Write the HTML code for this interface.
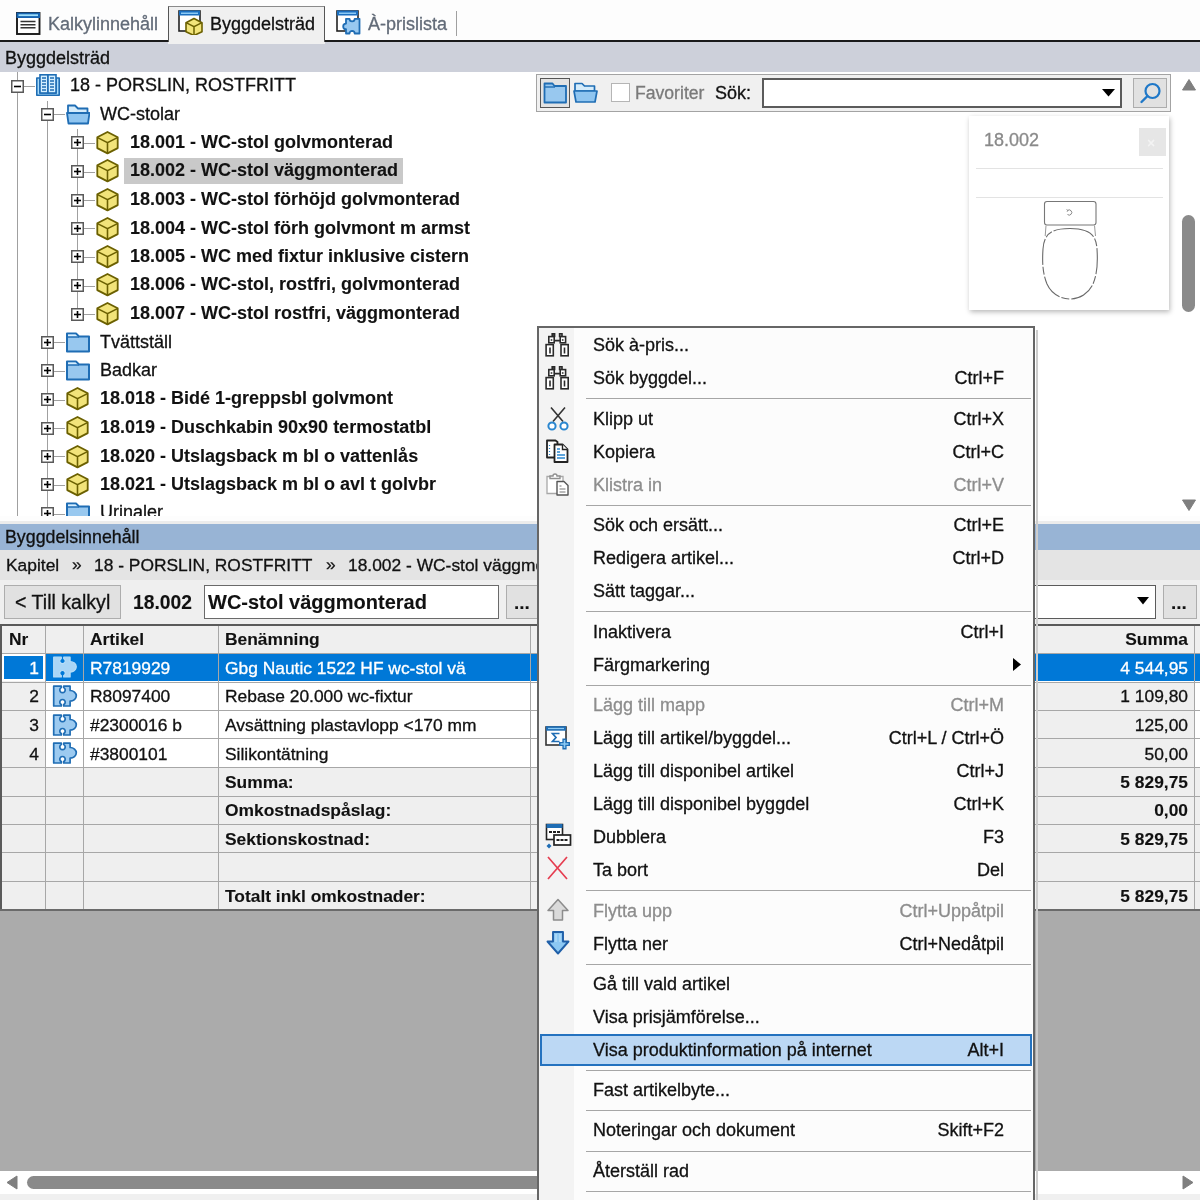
<!DOCTYPE html><html><head><meta charset="utf-8"><style>
html,body{margin:0;padding:0;width:1200px;height:1200px;overflow:hidden;background:#fff;font-family:"Liberation Sans", sans-serif;}
.t{position:absolute;white-space:pre;font-family:"Liberation Sans", sans-serif;}
.r{position:absolute;}
.wrap{position:absolute;left:0;top:0;width:1200px;height:1200px;overflow:hidden;will-change:transform;}
.t{-webkit-text-stroke:0.3px currentColor;}
.t.b{-webkit-text-stroke:0.1px currentColor;}
</style></head><body><div class="wrap">
<div class="r" style="left:0px;top:0px;width:1200px;height:40px;background:#fdfdfd"></div>
<div class="r" style="left:0px;top:40px;width:1200px;height:2px;background:#1a1a1a"></div>
<div class="r" style="left:168px;top:6px;width:157px;height:38px;background:#f0f0f0;border-left:1px solid #555;border-top:1px solid #8a8a8a;border-right:1px solid #555;box-sizing:border-box"></div>
<svg class="r" style="left:16px;top:12px" width="25" height="23" viewBox="0 0 25 23"><rect x="1" y="1" width="22.5" height="21" fill="#fff" stroke="#1a1a1a" stroke-width="1.9"/><rect x="0.5" y="0.5" width="23.5" height="5.5" fill="#1563b0"/><rect x="2.5" y="2.3" width="19.5" height="1.8" fill="#9fe0fb"/><path d="M4.5 9.5h15M4.5 12.8h15M4.5 15.8h15" stroke="#333" stroke-width="1.5"/></svg>
<div class="t" style="left:48px;top:14px;font-size:18px;line-height:20px;color:#626b78;">Kalkylinnehåll</div>
<svg class="r" style="left:178px;top:10px" width="26" height="25" viewBox="0 0 26 25"><rect x="1" y="1" width="21" height="20" fill="#fff" stroke="#222" stroke-width="1.6"/><rect x="1" y="0.5" width="21" height="5" fill="#1b6fc0"/><rect x="3" y="2.5" width="17" height="1.5" fill="#8ccaf5"/><path d="M16 8.5l8 4.2v9l-8 3.8l-8-3.8v-9z" fill="#f2e47a" stroke="#6b6000" stroke-width="1.6" stroke-linejoin="round"/><path d="M8 12.7l8 4l8-4M16 16.7v8.8" fill="none" stroke="#6b6000" stroke-width="1.5"/></svg>
<div class="t" style="left:210px;top:14px;font-size:18px;line-height:20px;color:#111;">Byggdelsträd</div>
<svg class="r" style="left:336px;top:10px" width="26" height="25" viewBox="0 0 26 25"><rect x="1" y="1" width="21" height="20" fill="#fff" stroke="#222" stroke-width="1.6"/><rect x="1" y="0.5" width="21" height="5" fill="#1b6fc0"/><rect x="3" y="2.5" width="17" height="1.5" fill="#8ccaf5"/><path d="M10 8.8h3.5a2.6 2.6 0 0 0 5.2 0h4.8v14.7h-4.8a2.6 2.6 0 0 0-5.2 0h-3.5v-4.3a2.8 2.8 0 0 1 0-5.6z" fill="#98c8f0" stroke="#1f6db4" stroke-width="1.8" stroke-linejoin="round"/></svg>
<div class="t" style="left:368px;top:14px;font-size:18px;line-height:20px;color:#626b78;">À-prislista</div>
<div class="r" style="left:456px;top:11px;width:1px;height:25px;background:#a0a0a0"></div>
<div class="r" style="left:0px;top:42px;width:1200px;height:30px;background:#cdd0da"></div>
<div class="r" style="left:168px;top:42px;width:157px;height:2px;background:#f0f0f0"></div>
<div class="t" style="left:5px;top:48px;font-size:18px;line-height:20px;color:#111;">Byggdelsträd</div>
<div class="r" style="left:0px;top:72px;width:1200px;height:444px;background:#fff"></div>
<div class="r" style="left:0;top:72px;width:1200px;height:444px;overflow:hidden">
<div class="r" style="left:0;top:-72px;width:1200px;height:1200px">
<div class="r" style="left:17px;top:72px;width:1px;height:444px;background:#a0a0a0"></div>
<div class="r" style="left:47px;top:101px;width:1px;height:444px;background:#a0a0a0"></div>
<div class="r" style="left:77px;top:129px;width:1px;height:185px;background:#a0a0a0"></div>
<div class="r" style="left:124px;top:158px;width:279px;height:26px;background:#c9c9c9"></div>
<div class="r" style="left:24px;top:86px;width:11px;height:1px;background:#a0a0a0"></div>
<svg class="r" style="left:11px;top:80px" width="13" height="13" viewBox="0 0 13 13"><rect x="0.75" y="0.75" width="11.5" height="11.5" fill="#fff" stroke="#5a5a5a" stroke-width="1.5"/><path d="M3 6.5h7" stroke="#000" stroke-width="1.6"/></svg>
<svg class="r" style="left:36px;top:74px" width="24" height="23" viewBox="0 0 24 23"><path d="M0.8 4h3.2v15h16v-15h3.2v17.2H0.8z" fill="#a9dcfb" stroke="#1f6db4" stroke-width="1.6" stroke-linejoin="round"/><rect x="4" y="0.8" width="8" height="18.2" fill="#d4efff" stroke="#1f6db4" stroke-width="1.6"/><rect x="12" y="0.8" width="8" height="18.2" fill="#d4efff" stroke="#1f6db4" stroke-width="1.6"/><path d="M6 4h4M6 7h4M6 10h4M6 13h4M6 16h4M14 4h4M14 7h4M14 10h4M14 13h4M14 16h4" stroke="#1f6db4" stroke-width="1.7"/></svg>
<div class="t" style="left:70px;top:75px;font-size:18px;line-height:20px;color:#111;">18 - PORSLIN, ROSTFRITT</div>
<div class="r" style="left:54px;top:114px;width:11px;height:1px;background:#a0a0a0"></div>
<svg class="r" style="left:41px;top:108px" width="13" height="13" viewBox="0 0 13 13"><rect x="0.75" y="0.75" width="11.5" height="11.5" fill="#fff" stroke="#5a5a5a" stroke-width="1.5"/><path d="M3 6.5h7" stroke="#000" stroke-width="1.6"/></svg>
<svg class="r" style="left:66px;top:104px" width="24" height="21" viewBox="0 0 24 21"><path d="M2 1.5h7l3 3h9.5v5H2z" fill="#d5ecfb" stroke="#1f6db4" stroke-width="1.8" stroke-linejoin="round"/><path d="M1 9h22.5l-1.5 10.5H2.5z" fill="#8fc5f0" stroke="#1f6db4" stroke-width="1.8" stroke-linejoin="round"/></svg>
<div class="t" style="left:100px;top:104px;font-size:18px;line-height:20px;color:#111;">WC-stolar</div>
<div class="r" style="left:84px;top:143px;width:11px;height:1px;background:#a0a0a0"></div>
<svg class="r" style="left:71px;top:136px" width="13" height="13" viewBox="0 0 13 13"><rect x="0.75" y="0.75" width="11.5" height="11.5" fill="#fff" stroke="#5a5a5a" stroke-width="1.5"/><path d="M3 6.5h7" stroke="#000" stroke-width="1.6"/><path d="M6.5 3v7" stroke="#000" stroke-width="1.6"/></svg>
<svg class="r" style="left:96px;top:131px" width="23" height="24" viewBox="0 0 23 24"><path d="M11.5 1l10.2 5.3v10.8l-10.2 5.3l-10.2-5.3v-10.8z" fill="#f2e47a" stroke="#6b6000" stroke-width="1.8" stroke-linejoin="round"/><path d="M1.6 6.6l9.9 5l9.9-5M11.5 11.6v10.6" fill="none" stroke="#6b6000" stroke-width="1.6"/></svg>
<div class="t b" style="left:130px;top:132px;font-size:18px;line-height:20px;font-weight:bold;color:#111;">18.001 - WC-stol golvmonterad</div>
<div class="r" style="left:84px;top:172px;width:11px;height:1px;background:#a0a0a0"></div>
<svg class="r" style="left:71px;top:165px" width="13" height="13" viewBox="0 0 13 13"><rect x="0.75" y="0.75" width="11.5" height="11.5" fill="#fff" stroke="#5a5a5a" stroke-width="1.5"/><path d="M3 6.5h7" stroke="#000" stroke-width="1.6"/><path d="M6.5 3v7" stroke="#000" stroke-width="1.6"/></svg>
<svg class="r" style="left:96px;top:159px" width="23" height="24" viewBox="0 0 23 24"><path d="M11.5 1l10.2 5.3v10.8l-10.2 5.3l-10.2-5.3v-10.8z" fill="#f2e47a" stroke="#6b6000" stroke-width="1.8" stroke-linejoin="round"/><path d="M1.6 6.6l9.9 5l9.9-5M11.5 11.6v10.6" fill="none" stroke="#6b6000" stroke-width="1.6"/></svg>
<div class="t b" style="left:130px;top:160px;font-size:18px;line-height:20px;font-weight:bold;color:#111;">18.002 - WC-stol väggmonterad</div>
<div class="r" style="left:84px;top:200px;width:11px;height:1px;background:#a0a0a0"></div>
<svg class="r" style="left:71px;top:194px" width="13" height="13" viewBox="0 0 13 13"><rect x="0.75" y="0.75" width="11.5" height="11.5" fill="#fff" stroke="#5a5a5a" stroke-width="1.5"/><path d="M3 6.5h7" stroke="#000" stroke-width="1.6"/><path d="M6.5 3v7" stroke="#000" stroke-width="1.6"/></svg>
<svg class="r" style="left:96px;top:188px" width="23" height="24" viewBox="0 0 23 24"><path d="M11.5 1l10.2 5.3v10.8l-10.2 5.3l-10.2-5.3v-10.8z" fill="#f2e47a" stroke="#6b6000" stroke-width="1.8" stroke-linejoin="round"/><path d="M1.6 6.6l9.9 5l9.9-5M11.5 11.6v10.6" fill="none" stroke="#6b6000" stroke-width="1.6"/></svg>
<div class="t b" style="left:130px;top:189px;font-size:18px;line-height:20px;font-weight:bold;color:#111;">18.003 - WC-stol förhöjd golvmonterad</div>
<div class="r" style="left:84px;top:228px;width:11px;height:1px;background:#a0a0a0"></div>
<svg class="r" style="left:71px;top:222px" width="13" height="13" viewBox="0 0 13 13"><rect x="0.75" y="0.75" width="11.5" height="11.5" fill="#fff" stroke="#5a5a5a" stroke-width="1.5"/><path d="M3 6.5h7" stroke="#000" stroke-width="1.6"/><path d="M6.5 3v7" stroke="#000" stroke-width="1.6"/></svg>
<svg class="r" style="left:96px;top:217px" width="23" height="24" viewBox="0 0 23 24"><path d="M11.5 1l10.2 5.3v10.8l-10.2 5.3l-10.2-5.3v-10.8z" fill="#f2e47a" stroke="#6b6000" stroke-width="1.8" stroke-linejoin="round"/><path d="M1.6 6.6l9.9 5l9.9-5M11.5 11.6v10.6" fill="none" stroke="#6b6000" stroke-width="1.6"/></svg>
<div class="t b" style="left:130px;top:218px;font-size:18px;line-height:20px;font-weight:bold;color:#111;">18.004 - WC-stol förh golvmont m armst</div>
<div class="r" style="left:84px;top:257px;width:11px;height:1px;background:#a0a0a0"></div>
<svg class="r" style="left:71px;top:250px" width="13" height="13" viewBox="0 0 13 13"><rect x="0.75" y="0.75" width="11.5" height="11.5" fill="#fff" stroke="#5a5a5a" stroke-width="1.5"/><path d="M3 6.5h7" stroke="#000" stroke-width="1.6"/><path d="M6.5 3v7" stroke="#000" stroke-width="1.6"/></svg>
<svg class="r" style="left:96px;top:245px" width="23" height="24" viewBox="0 0 23 24"><path d="M11.5 1l10.2 5.3v10.8l-10.2 5.3l-10.2-5.3v-10.8z" fill="#f2e47a" stroke="#6b6000" stroke-width="1.8" stroke-linejoin="round"/><path d="M1.6 6.6l9.9 5l9.9-5M11.5 11.6v10.6" fill="none" stroke="#6b6000" stroke-width="1.6"/></svg>
<div class="t b" style="left:130px;top:246px;font-size:18px;line-height:20px;font-weight:bold;color:#111;">18.005 - WC med fixtur inklusive cistern</div>
<div class="r" style="left:84px;top:286px;width:11px;height:1px;background:#a0a0a0"></div>
<svg class="r" style="left:71px;top:279px" width="13" height="13" viewBox="0 0 13 13"><rect x="0.75" y="0.75" width="11.5" height="11.5" fill="#fff" stroke="#5a5a5a" stroke-width="1.5"/><path d="M3 6.5h7" stroke="#000" stroke-width="1.6"/><path d="M6.5 3v7" stroke="#000" stroke-width="1.6"/></svg>
<svg class="r" style="left:96px;top:273px" width="23" height="24" viewBox="0 0 23 24"><path d="M11.5 1l10.2 5.3v10.8l-10.2 5.3l-10.2-5.3v-10.8z" fill="#f2e47a" stroke="#6b6000" stroke-width="1.8" stroke-linejoin="round"/><path d="M1.6 6.6l9.9 5l9.9-5M11.5 11.6v10.6" fill="none" stroke="#6b6000" stroke-width="1.6"/></svg>
<div class="t b" style="left:130px;top:274px;font-size:18px;line-height:20px;font-weight:bold;color:#111;">18.006 - WC-stol, rostfri, golvmonterad</div>
<div class="r" style="left:84px;top:314px;width:11px;height:1px;background:#a0a0a0"></div>
<svg class="r" style="left:71px;top:308px" width="13" height="13" viewBox="0 0 13 13"><rect x="0.75" y="0.75" width="11.5" height="11.5" fill="#fff" stroke="#5a5a5a" stroke-width="1.5"/><path d="M3 6.5h7" stroke="#000" stroke-width="1.6"/><path d="M6.5 3v7" stroke="#000" stroke-width="1.6"/></svg>
<svg class="r" style="left:96px;top:302px" width="23" height="24" viewBox="0 0 23 24"><path d="M11.5 1l10.2 5.3v10.8l-10.2 5.3l-10.2-5.3v-10.8z" fill="#f2e47a" stroke="#6b6000" stroke-width="1.8" stroke-linejoin="round"/><path d="M1.6 6.6l9.9 5l9.9-5M11.5 11.6v10.6" fill="none" stroke="#6b6000" stroke-width="1.6"/></svg>
<div class="t b" style="left:130px;top:303px;font-size:18px;line-height:20px;font-weight:bold;color:#111;">18.007 - WC-stol rostfri, väggmonterad</div>
<div class="r" style="left:54px;top:342px;width:11px;height:1px;background:#a0a0a0"></div>
<svg class="r" style="left:41px;top:336px" width="13" height="13" viewBox="0 0 13 13"><rect x="0.75" y="0.75" width="11.5" height="11.5" fill="#fff" stroke="#5a5a5a" stroke-width="1.5"/><path d="M3 6.5h7" stroke="#000" stroke-width="1.6"/><path d="M6.5 3v7" stroke="#000" stroke-width="1.6"/></svg>
<svg class="r" style="left:66px;top:332px" width="24" height="21" viewBox="0 0 24 21"><path d="M1 1.5h9l3 3h10v15H1z" fill="#98c8ef" stroke="#1f6db4" stroke-width="2" stroke-linejoin="round"/><path d="M2 2.5h7.5l2.5 2.5H2z" fill="#d8efff"/><path d="M1 5h12" stroke="#1f6db4" stroke-width="1.5"/></svg>
<div class="t" style="left:100px;top:332px;font-size:18px;line-height:20px;color:#111;">Tvättställ</div>
<div class="r" style="left:54px;top:371px;width:11px;height:1px;background:#a0a0a0"></div>
<svg class="r" style="left:41px;top:364px" width="13" height="13" viewBox="0 0 13 13"><rect x="0.75" y="0.75" width="11.5" height="11.5" fill="#fff" stroke="#5a5a5a" stroke-width="1.5"/><path d="M3 6.5h7" stroke="#000" stroke-width="1.6"/><path d="M6.5 3v7" stroke="#000" stroke-width="1.6"/></svg>
<svg class="r" style="left:66px;top:360px" width="24" height="21" viewBox="0 0 24 21"><path d="M1 1.5h9l3 3h10v15H1z" fill="#98c8ef" stroke="#1f6db4" stroke-width="2" stroke-linejoin="round"/><path d="M2 2.5h7.5l2.5 2.5H2z" fill="#d8efff"/><path d="M1 5h12" stroke="#1f6db4" stroke-width="1.5"/></svg>
<div class="t" style="left:100px;top:360px;font-size:18px;line-height:20px;color:#111;">Badkar</div>
<div class="r" style="left:54px;top:400px;width:11px;height:1px;background:#a0a0a0"></div>
<svg class="r" style="left:41px;top:393px" width="13" height="13" viewBox="0 0 13 13"><rect x="0.75" y="0.75" width="11.5" height="11.5" fill="#fff" stroke="#5a5a5a" stroke-width="1.5"/><path d="M3 6.5h7" stroke="#000" stroke-width="1.6"/><path d="M6.5 3v7" stroke="#000" stroke-width="1.6"/></svg>
<svg class="r" style="left:66px;top:387px" width="23" height="24" viewBox="0 0 23 24"><path d="M11.5 1l10.2 5.3v10.8l-10.2 5.3l-10.2-5.3v-10.8z" fill="#f2e47a" stroke="#6b6000" stroke-width="1.8" stroke-linejoin="round"/><path d="M1.6 6.6l9.9 5l9.9-5M11.5 11.6v10.6" fill="none" stroke="#6b6000" stroke-width="1.6"/></svg>
<div class="t b" style="left:100px;top:388px;font-size:18px;line-height:20px;font-weight:bold;color:#111;">18.018 - Bidé 1-greppsbl golvmont</div>
<div class="r" style="left:54px;top:428px;width:11px;height:1px;background:#a0a0a0"></div>
<svg class="r" style="left:41px;top:422px" width="13" height="13" viewBox="0 0 13 13"><rect x="0.75" y="0.75" width="11.5" height="11.5" fill="#fff" stroke="#5a5a5a" stroke-width="1.5"/><path d="M3 6.5h7" stroke="#000" stroke-width="1.6"/><path d="M6.5 3v7" stroke="#000" stroke-width="1.6"/></svg>
<svg class="r" style="left:66px;top:416px" width="23" height="24" viewBox="0 0 23 24"><path d="M11.5 1l10.2 5.3v10.8l-10.2 5.3l-10.2-5.3v-10.8z" fill="#f2e47a" stroke="#6b6000" stroke-width="1.8" stroke-linejoin="round"/><path d="M1.6 6.6l9.9 5l9.9-5M11.5 11.6v10.6" fill="none" stroke="#6b6000" stroke-width="1.6"/></svg>
<div class="t b" style="left:100px;top:417px;font-size:18px;line-height:20px;font-weight:bold;color:#111;">18.019 - Duschkabin 90x90 termostatbl</div>
<div class="r" style="left:54px;top:456px;width:11px;height:1px;background:#a0a0a0"></div>
<svg class="r" style="left:41px;top:450px" width="13" height="13" viewBox="0 0 13 13"><rect x="0.75" y="0.75" width="11.5" height="11.5" fill="#fff" stroke="#5a5a5a" stroke-width="1.5"/><path d="M3 6.5h7" stroke="#000" stroke-width="1.6"/><path d="M6.5 3v7" stroke="#000" stroke-width="1.6"/></svg>
<svg class="r" style="left:66px;top:445px" width="23" height="24" viewBox="0 0 23 24"><path d="M11.5 1l10.2 5.3v10.8l-10.2 5.3l-10.2-5.3v-10.8z" fill="#f2e47a" stroke="#6b6000" stroke-width="1.8" stroke-linejoin="round"/><path d="M1.6 6.6l9.9 5l9.9-5M11.5 11.6v10.6" fill="none" stroke="#6b6000" stroke-width="1.6"/></svg>
<div class="t b" style="left:100px;top:446px;font-size:18px;line-height:20px;font-weight:bold;color:#111;">18.020 - Utslagsback m bl o vattenlås</div>
<div class="r" style="left:54px;top:485px;width:11px;height:1px;background:#a0a0a0"></div>
<svg class="r" style="left:41px;top:478px" width="13" height="13" viewBox="0 0 13 13"><rect x="0.75" y="0.75" width="11.5" height="11.5" fill="#fff" stroke="#5a5a5a" stroke-width="1.5"/><path d="M3 6.5h7" stroke="#000" stroke-width="1.6"/><path d="M6.5 3v7" stroke="#000" stroke-width="1.6"/></svg>
<svg class="r" style="left:66px;top:473px" width="23" height="24" viewBox="0 0 23 24"><path d="M11.5 1l10.2 5.3v10.8l-10.2 5.3l-10.2-5.3v-10.8z" fill="#f2e47a" stroke="#6b6000" stroke-width="1.8" stroke-linejoin="round"/><path d="M1.6 6.6l9.9 5l9.9-5M11.5 11.6v10.6" fill="none" stroke="#6b6000" stroke-width="1.6"/></svg>
<div class="t b" style="left:100px;top:474px;font-size:18px;line-height:20px;font-weight:bold;color:#111;">18.021 - Utslagsback m bl o avl t golvbr</div>
<div class="r" style="left:54px;top:514px;width:11px;height:1px;background:#a0a0a0"></div>
<svg class="r" style="left:41px;top:507px" width="13" height="13" viewBox="0 0 13 13"><rect x="0.75" y="0.75" width="11.5" height="11.5" fill="#fff" stroke="#5a5a5a" stroke-width="1.5"/><path d="M3 6.5h7" stroke="#000" stroke-width="1.6"/><path d="M6.5 3v7" stroke="#000" stroke-width="1.6"/></svg>
<svg class="r" style="left:66px;top:502px" width="24" height="21" viewBox="0 0 24 21"><path d="M1 1.5h9l3 3h10v15H1z" fill="#98c8ef" stroke="#1f6db4" stroke-width="2" stroke-linejoin="round"/><path d="M2 2.5h7.5l2.5 2.5H2z" fill="#d8efff"/><path d="M1 5h12" stroke="#1f6db4" stroke-width="1.5"/></svg>
<div class="t" style="left:100px;top:502px;font-size:18px;line-height:20px;color:#111;">Urinaler</div>
</div></div>
<div class="r" style="left:536px;top:74px;width:635px;height:38px;background:#f0f0f0;border:1px solid #a3a3a3;box-sizing:border-box"></div>
<div class="r" style="left:540px;top:78px;width:30px;height:30px;background:#e2e2e2;border:1.5px solid #555;box-sizing:border-box"></div>
<svg class="r" style="left:543px;top:82px" width="25" height="22" viewBox="0 0 25 22"><path d="M1.5 1.5h8l2 2.5h11.5v16.5h-21.5z" fill="#98c8ef" stroke="#1f6db4" stroke-width="1.8" stroke-linejoin="round"/><path d="M1.5 5h10.5" stroke="#1f6db4" stroke-width="1.4"/></svg>
<svg class="r" style="left:573px;top:82px" width="25" height="22" viewBox="0 0 25 22"><path d="M2 1.5h7l2.5 2.5h10v5H2z" fill="#d5ecfb" stroke="#1f6db4" stroke-width="1.7" stroke-linejoin="round"/><path d="M1 9h23l-2 11H3z" fill="#8fc5f0" stroke="#1f6db4" stroke-width="1.7" stroke-linejoin="round"/></svg>
<div class="r" style="left:611px;top:83px;width:19px;height:19px;background:#fff;border:1px solid #b5b5b5;box-sizing:border-box"></div>
<div class="t" style="left:635px;top:83px;font-size:17.6px;line-height:20px;color:#7a7a7a;">Favoriter</div>
<div class="t" style="left:715px;top:83px;font-size:18px;line-height:20px;color:#111;">Sök:</div>
<div class="r" style="left:762px;top:78px;width:360px;height:30px;background:#fff;border:2px solid #5b5b5b;box-sizing:border-box"></div>
<svg class="r" style="left:1102px;top:89px" width="13" height="8" viewBox="0 0 13 8"><path d="M0 0h13l-6.5 7.5z" fill="#000"/></svg>
<div class="r" style="left:1133px;top:78px;width:34px;height:30px;background:#e1e1e1;border:1px solid #adadad;box-sizing:border-box"></div>
<svg class="r" style="left:1138px;top:81px" width="25" height="25" viewBox="0 0 25 25"><circle cx="14.5" cy="10" r="7" fill="none" stroke="#1f78c8" stroke-width="2.2"/><path d="M9.5 15l-6 6" stroke="#1f78c8" stroke-width="2.4" stroke-linecap="round"/></svg>
<div class="r" style="left:969px;top:116px;width:200px;height:194px;background:#fff;box-shadow:1px 2px 5px rgba(0,0,0,0.28)"></div>
<div class="t" style="left:984px;top:130px;font-size:18px;line-height:20px;color:#8a8a8a;">18.002</div>
<div class="r" style="left:1139px;top:128px;width:27px;height:28px;background:#e6e6e6"></div>
<div class="t" style="left:1147px;top:135px;font-size:14px;line-height:16px;color:#f4f4f4;">×</div>
<div class="r" style="left:976px;top:168px;width:187px;height:1px;background:#e3e3e3"></div>
<div class="r" style="left:976px;top:197px;width:187px;height:1px;background:#e3e3e3"></div>
<svg class="r" style="left:1040px;top:199px" width="60" height="104" viewBox="0 0 60 104"><rect x="4.5" y="2.5" width="51.5" height="23.5" rx="2.5" fill="#fff" stroke="#777" stroke-width="1.1"/><path d="M27.5 11.5a2.6 2.6 0 1 1 0 4" fill="none" stroke="#888" stroke-width="1"/><path d="M26.5 10.5l1.5 1l-1 1.3" fill="none" stroke="#888" stroke-width="0.9"/><path d="M6 26.5L5.2 37M54.5 26.5L55.5 37" fill="none" stroke="#999" stroke-width="1"/><path d="M30 29.5C46 29.5 56 33 57 50C58 65 57 75 53 85C49 94 40 100 30 100C20 100 11 94 7 85C3 75 2 65 3 50C4 33 14 29.5 30 29.5Z" fill="#fff" stroke="#6a6a6a" stroke-width="1.1" stroke-dasharray="26 2 8 2"/></svg>
<svg class="r" style="left:1182px;top:79px" width="14" height="12" viewBox="0 0 14 12"><path d="M7 0.5l6.5 10.5h-13z" fill="#7f7f7f" stroke="#7f7f7f" stroke-linejoin="round"/></svg>
<div class="r" style="left:1182px;top:215px;width:13px;height:97px;background:#8a8a8a;border-radius:6.5px"></div>
<svg class="r" style="left:1182px;top:499px" width="14" height="12" viewBox="0 0 14 12"><path d="M7 11.5l6.5-10.5h-13z" fill="#7f7f7f" stroke="#7f7f7f" stroke-linejoin="round"/></svg>
<div class="r" style="left:0px;top:516px;width:1200px;height:5px;background:#fdfdfd"></div>
<div class="r" style="left:0px;top:521px;width:1200px;height:3px;background:#ececec"></div>
<div class="r" style="left:0px;top:524px;width:1200px;height:26px;background:#98b4d5"></div>
<div class="t" style="left:5px;top:527px;font-size:17.8px;line-height:20px;color:#111;">Byggdelsinnehåll</div>
<div class="r" style="left:0px;top:550px;width:1200px;height:30px;background:#e4e4e4"></div>
<div class="t" style="left:6px;top:555px;font-size:17.4px;line-height:20px;color:#111;">Kapitel</div>
<div class="t" style="left:72px;top:554px;font-size:17.4px;line-height:20px;color:#111;">»</div>
<div class="t" style="left:94px;top:555px;font-size:17.4px;line-height:20px;color:#111;">18 - PORSLIN, ROSTFRITT</div>
<div class="t" style="left:326px;top:554px;font-size:17.4px;line-height:20px;color:#111;">»</div>
<div class="t" style="left:348px;top:555px;font-size:17.4px;line-height:20px;color:#111;">18.002 - WC-stol väggmonterad</div>
<div class="r" style="left:0px;top:580px;width:1200px;height:44px;background:#efefef"></div>
<div class="r" style="left:4px;top:585px;width:117px;height:34px;background:#e1e1e1;border:1px solid #adadad;box-sizing:border-box"></div>
<div class="t" style="left:15px;top:591px;font-size:19.6px;line-height:22px;color:#111;">&lt; Till kalkyl</div>
<div class="t b" style="left:133px;top:592px;font-size:19.3px;line-height:21px;font-weight:bold;color:#111;">18.002</div>
<div class="r" style="left:204px;top:585px;width:295px;height:34px;background:#fff;border:1px solid #6a6a6a;box-sizing:border-box"></div>
<div class="t b" style="left:208px;top:591px;font-size:20px;line-height:22px;font-weight:bold;color:#111;">WC-stol väggmonterad</div>
<div class="r" style="left:506px;top:585px;width:34px;height:34px;background:#e1e1e1;border:1px solid #adadad;box-sizing:border-box"></div>
<div class="t b" style="left:514px;top:592px;font-size:19px;line-height:21px;font-weight:bold;color:#111;">...</div>
<div class="r" style="left:1000px;top:585px;width:156px;height:34px;background:#fff;border:1px solid #5b5b5b;box-sizing:border-box"></div>
<svg class="r" style="left:1137px;top:597px" width="12" height="8" viewBox="0 0 12 8"><path d="M0 0h12l-6 7.5z" fill="#000"/></svg>
<div class="r" style="left:1163px;top:585px;width:34px;height:34px;background:#e1e1e1;border:1px solid #adadad;box-sizing:border-box"></div>
<div class="t b" style="left:1171px;top:592px;font-size:19px;line-height:21px;font-weight:bold;color:#111;">...</div>
<div class="r" style="left:0px;top:624px;width:1200px;height:286px;background:#fff"></div>
<div class="r" style="left:0px;top:624px;width:1200px;height:2px;background:#5a5a5a"></div>
<div class="r" style="left:0px;top:624px;width:2px;height:286px;background:#5a5a5a"></div>
<div class="r" style="left:2px;top:626px;width:1198px;height:27px;background:#efefef"></div>
<div class="r" style="left:2px;top:654px;width:44px;height:28px;background:#efefef"></div>
<div class="r" style="left:2px;top:683px;width:44px;height:28px;background:#efefef"></div>
<div class="r" style="left:2px;top:711px;width:44px;height:28px;background:#efefef"></div>
<div class="r" style="left:2px;top:739px;width:44px;height:28px;background:#efefef"></div>
<div class="r" style="left:2px;top:768px;width:44px;height:28px;background:#efefef"></div>
<div class="r" style="left:2px;top:797px;width:44px;height:28px;background:#efefef"></div>
<div class="r" style="left:2px;top:825px;width:44px;height:28px;background:#efefef"></div>
<div class="r" style="left:2px;top:853px;width:44px;height:28px;background:#efefef"></div>
<div class="r" style="left:2px;top:882px;width:44px;height:28px;background:#efefef"></div>
<div class="r" style="left:1036px;top:683px;width:158px;height:28px;background:#efefef"></div>
<div class="r" style="left:1036px;top:711px;width:158px;height:28px;background:#efefef"></div>
<div class="r" style="left:1036px;top:739px;width:158px;height:28px;background:#efefef"></div>
<div class="r" style="left:2px;top:768px;width:1198px;height:28px;background:#efefef"></div>
<div class="r" style="left:2px;top:797px;width:1198px;height:28px;background:#efefef"></div>
<div class="r" style="left:2px;top:825px;width:1198px;height:28px;background:#efefef"></div>
<div class="r" style="left:2px;top:853px;width:1198px;height:28px;background:#efefef"></div>
<div class="r" style="left:2px;top:882px;width:1198px;height:28px;background:#efefef"></div>
<div class="r" style="left:46px;top:654px;width:1154px;height:27px;background:#0078d7"></div>
<div class="r" style="left:2px;top:654px;width:44px;height:27px;background:#fff"></div>
<div class="r" style="left:4px;top:656px;width:39px;height:23px;background:#0078d7"></div>
<div class="r" style="left:2px;top:653px;width:1198px;height:1px;background:#a7a7a7"></div>
<div class="r" style="left:2px;top:682px;width:1198px;height:1px;background:#a7a7a7"></div>
<div class="r" style="left:2px;top:710px;width:1198px;height:1px;background:#a7a7a7"></div>
<div class="r" style="left:2px;top:738px;width:1198px;height:1px;background:#a7a7a7"></div>
<div class="r" style="left:2px;top:767px;width:1198px;height:1px;background:#a7a7a7"></div>
<div class="r" style="left:2px;top:796px;width:1198px;height:1px;background:#a7a7a7"></div>
<div class="r" style="left:2px;top:824px;width:1198px;height:1px;background:#a7a7a7"></div>
<div class="r" style="left:2px;top:852px;width:1198px;height:1px;background:#a7a7a7"></div>
<div class="r" style="left:2px;top:881px;width:1198px;height:1px;background:#a7a7a7"></div>
<div class="r" style="left:0px;top:909px;width:1200px;height:2px;background:#6a6a6a"></div>
<div class="r" style="left:45px;top:626px;width:1px;height:283px;background:#a7a7a7"></div>
<div class="r" style="left:83px;top:626px;width:1px;height:283px;background:#a7a7a7"></div>
<div class="r" style="left:218px;top:626px;width:1px;height:283px;background:#a7a7a7"></div>
<div class="r" style="left:530px;top:626px;width:1px;height:283px;background:#a7a7a7"></div>
<div class="r" style="left:1194px;top:626px;width:1px;height:283px;background:#a7a7a7"></div>
<div class="t b" style="left:9px;top:629px;font-size:17.4px;line-height:20px;font-weight:bold;color:#111;">Nr</div>
<div class="t b" style="left:90px;top:629px;font-size:17.4px;line-height:20px;font-weight:bold;color:#111;">Artikel</div>
<div class="t b" style="left:225px;top:629px;font-size:17.4px;line-height:20px;font-weight:bold;color:#111;">Benämning</div>
<div class="t b" style="right:12px;top:629px;font-size:17.4px;line-height:20px;font-weight:bold;color:#111;">Summa</div>
<div class="t" style="right:1161px;top:658px;font-size:17.4px;line-height:20px;color:#fff;">1</div>
<svg class="r" style="left:52px;top:656px" width="26" height="23" viewBox="0 0 26 23"><path d="M1.2 1.2H8.8V2.6A2.7 2.7 0 1 0 11.2 2.6V1.2H17.6V5.5A6.2 5.35 0 0 1 17.6 16.2V21H11.2V19.6A2.7 2.7 0 1 0 8.8 19.6V21H1.2Z" fill="#a9d5f6" stroke="#b8def8" stroke-width="1.2" stroke-linejoin="round" transform="translate(0.5,0)"/></svg>
<div class="t" style="left:90px;top:658px;font-size:17.4px;line-height:20px;color:#fff;">R7819929</div>
<div class="t" style="left:225px;top:658px;font-size:17.4px;line-height:20px;color:#fff;">Gbg Nautic 1522 HF wc-stol vä</div>
<div class="t" style="right:12px;top:658px;font-size:17.4px;line-height:20px;color:#fff;">4 544,95</div>
<div class="t" style="right:1161px;top:686px;font-size:17.4px;line-height:20px;color:#111;">2</div>
<svg class="r" style="left:52px;top:685px" width="26" height="23" viewBox="0 0 26 23"><path d="M1.2 1.2H8.8V2.6A2.7 2.7 0 1 0 11.2 2.6V1.2H17.6V5.5A6.2 5.35 0 0 1 17.6 16.2V21H11.2V19.6A2.7 2.7 0 1 0 8.8 19.6V21H1.2Z" fill="#9ccaf0" stroke="#1f6db4" stroke-width="1.7" stroke-linejoin="round" transform="translate(0.5,0)"/></svg>
<div class="t" style="left:90px;top:686px;font-size:17.4px;line-height:20px;color:#111;">R8097400</div>
<div class="t" style="left:225px;top:686px;font-size:17.4px;line-height:20px;color:#111;">Rebase 20.000 wc-fixtur</div>
<div class="t" style="right:12px;top:686px;font-size:17.4px;line-height:20px;color:#111;">1 109,80</div>
<div class="t" style="right:1161px;top:715px;font-size:17.4px;line-height:20px;color:#111;">3</div>
<svg class="r" style="left:52px;top:714px" width="26" height="23" viewBox="0 0 26 23"><path d="M1.2 1.2H8.8V2.6A2.7 2.7 0 1 0 11.2 2.6V1.2H17.6V5.5A6.2 5.35 0 0 1 17.6 16.2V21H11.2V19.6A2.7 2.7 0 1 0 8.8 19.6V21H1.2Z" fill="#9ccaf0" stroke="#1f6db4" stroke-width="1.7" stroke-linejoin="round" transform="translate(0.5,0)"/></svg>
<div class="t" style="left:90px;top:715px;font-size:17.4px;line-height:20px;color:#111;">#2300016 b</div>
<div class="t" style="left:225px;top:715px;font-size:17.4px;line-height:20px;color:#111;">Avsättning plastavlopp &lt;170 mm</div>
<div class="t" style="right:12px;top:715px;font-size:17.4px;line-height:20px;color:#111;">125,00</div>
<div class="t" style="right:1161px;top:744px;font-size:17.4px;line-height:20px;color:#111;">4</div>
<svg class="r" style="left:52px;top:742px" width="26" height="23" viewBox="0 0 26 23"><path d="M1.2 1.2H8.8V2.6A2.7 2.7 0 1 0 11.2 2.6V1.2H17.6V5.5A6.2 5.35 0 0 1 17.6 16.2V21H11.2V19.6A2.7 2.7 0 1 0 8.8 19.6V21H1.2Z" fill="#9ccaf0" stroke="#1f6db4" stroke-width="1.7" stroke-linejoin="round" transform="translate(0.5,0)"/></svg>
<div class="t" style="left:90px;top:744px;font-size:17.4px;line-height:20px;color:#111;">#3800101</div>
<div class="t" style="left:225px;top:744px;font-size:17.4px;line-height:20px;color:#111;">Silikontätning</div>
<div class="t" style="right:12px;top:744px;font-size:17.4px;line-height:20px;color:#111;">50,00</div>
<div class="t b" style="left:225px;top:772px;font-size:17.4px;line-height:20px;font-weight:bold;color:#111;">Summa:</div>
<div class="t b" style="right:12px;top:772px;font-size:17.4px;line-height:20px;font-weight:bold;color:#111;">5 829,75</div>
<div class="t b" style="left:225px;top:800px;font-size:17.4px;line-height:20px;font-weight:bold;color:#111;">Omkostnadspåslag:</div>
<div class="t b" style="right:12px;top:800px;font-size:17.4px;line-height:20px;font-weight:bold;color:#111;">0,00</div>
<div class="t b" style="left:225px;top:829px;font-size:17.4px;line-height:20px;font-weight:bold;color:#111;">Sektionskostnad:</div>
<div class="t b" style="right:12px;top:829px;font-size:17.4px;line-height:20px;font-weight:bold;color:#111;">5 829,75</div>
<div class="t b" style="left:225px;top:886px;font-size:17.4px;line-height:20px;font-weight:bold;color:#111;">Totalt inkl omkostnader:</div>
<div class="t b" style="right:12px;top:886px;font-size:17.4px;line-height:20px;font-weight:bold;color:#111;">5 829,75</div>
<div class="r" style="left:0px;top:911px;width:1200px;height:260px;background:#ababab"></div>
<div class="r" style="left:0px;top:1171px;width:1200px;height:23px;background:#fff"></div>
<div class="r" style="left:0px;top:1194px;width:1200px;height:6px;background:#f0f0f0"></div>
<svg class="r" style="left:6px;top:1175px" width="12" height="15" viewBox="0 0 12 15"><path d="M11 1v13L1 7.5z" fill="#7f7f7f" stroke="#7f7f7f" stroke-linejoin="round"/></svg>
<div class="r" style="left:27px;top:1176px;width:960px;height:13px;background:#8a8a8a;border-radius:6.5px"></div>
<svg class="r" style="left:1182px;top:1175px" width="12" height="15" viewBox="0 0 12 15"><path d="M1 1v13l10-6.5z" fill="#7f7f7f" stroke="#7f7f7f" stroke-linejoin="round"/></svg>
<div class="r" style="left:1036px;top:330px;width:2px;height:880px;background:#cdcdcd"></div>
<div class="r" style="left:537px;top:326px;width:498px;height:880px;background:#fcfcfc;border:2px solid #666;box-sizing:border-box"></div>
<div class="r" style="left:539px;top:328px;width:35px;height:876px;background:#f3f3f3"></div>
<div class="t" style="left:593px;top:335px;font-size:18px;line-height:20px;color:#111;">Sök à-pris...</div>
<svg class="r" style="left:544px;top:332px" width="26" height="26" viewBox="0 0 26 26"><g fill="#fff" stroke="#2a2a2a" stroke-width="1.6"><rect x="8.2" y="1.8" width="2.4" height="2.6"/><rect x="15.6" y="1.8" width="2.4" height="2.6"/><rect x="4.8" y="4.6" width="5.4" height="6.2"/><rect x="16.2" y="4.6" width="5.4" height="6.2"/><rect x="2.1" y="12.6" width="7.2" height="11.2"/><rect x="17" y="12.6" width="7.2" height="11.2"/><path d="M10.2 8.6h6M6 15.5v6M20.5 15.5v6M7.5 7.2v1.6M18.7 7.2v1.6" fill="none"/></g></svg>
<div class="t" style="left:593px;top:368px;font-size:18px;line-height:20px;color:#111;">Sök byggdel...</div>
<div class="t" style="right:196px;top:368px;font-size:18px;line-height:20px;color:#111;">Ctrl+F</div>
<svg class="r" style="left:544px;top:365px" width="26" height="26" viewBox="0 0 26 26"><g fill="#fff" stroke="#2a2a2a" stroke-width="1.6"><rect x="8.2" y="1.8" width="2.4" height="2.6"/><rect x="15.6" y="1.8" width="2.4" height="2.6"/><rect x="4.8" y="4.6" width="5.4" height="6.2"/><rect x="16.2" y="4.6" width="5.4" height="6.2"/><rect x="2.1" y="12.6" width="7.2" height="11.2"/><rect x="17" y="12.6" width="7.2" height="11.2"/><path d="M10.2 8.6h6M6 15.5v6M20.5 15.5v6M7.5 7.2v1.6M18.7 7.2v1.6" fill="none"/></g></svg>
<div class="r" style="left:586px;top:398px;width:445px;height:1px;background:#a6a6a6"></div>
<div class="t" style="left:593px;top:409px;font-size:18px;line-height:20px;color:#111;">Klipp ut</div>
<div class="t" style="right:196px;top:409px;font-size:18px;line-height:20px;color:#111;">Ctrl+X</div>
<svg class="r" style="left:545px;top:404px" width="26" height="28" viewBox="0 0 26 28"><path d="M6 3.5l12 14M20 3.5l-12 14" stroke="#333" stroke-width="1.6" fill="none"/><circle cx="7" cy="22" r="3.6" fill="#fff" stroke="#2a86cf" stroke-width="2"/><circle cx="19" cy="22" r="3.6" fill="#fff" stroke="#2a86cf" stroke-width="2"/></svg>
<div class="t" style="left:593px;top:442px;font-size:18px;line-height:20px;color:#111;">Kopiera</div>
<div class="t" style="right:196px;top:442px;font-size:18px;line-height:20px;color:#111;">Ctrl+C</div>
<svg class="r" style="left:545px;top:438px" width="26" height="26" viewBox="0 0 26 26"><path d="M2 2.5h8.5l2 1.5v15.5H2z" fill="#fff" stroke="#222" stroke-width="1.8" stroke-linejoin="round"/><path d="M4.5 7v1M4.5 10v1M4.5 13v1M4.5 16v1" stroke="#2a86cf" stroke-width="1.2"/><path d="M9.5 6.5h8l5 5v12.5h-13z" fill="#fff" stroke="#222" stroke-width="1.8" stroke-linejoin="round"/><path d="M17.5 6.5v5h5" fill="#fff" stroke="#222" stroke-width="1.4"/><path d="M12 11h3M12 14h3M12 17h8M12 20h8" stroke="#2a86cf" stroke-width="1.6"/></svg>
<div class="t" style="left:593px;top:475px;font-size:18px;line-height:20px;color:#8d8d8d;">Klistra in</div>
<div class="t" style="right:196px;top:475px;font-size:18px;line-height:20px;color:#8d8d8d;">Ctrl+V</div>
<svg class="r" style="left:545px;top:471px" width="26" height="26" viewBox="0 0 26 26"><path d="M2 5.5h16v17H2z" fill="#fff" stroke="#a8a8a8" stroke-width="1.3"/><path d="M5 7.5v-2.5h3a2 2 0 0 1 4 0h3v2.5z" fill="#fff" stroke="#909090" stroke-width="1.4"/><path d="M12 10.5h7l4 4v9.5h-11z" fill="#fff" stroke="#555" stroke-width="1.4" stroke-linejoin="round"/><path d="M14.5 15h2M14.5 18h6M14.5 21h6" stroke="#777" stroke-width="1.1"/></svg>
<div class="r" style="left:586px;top:505px;width:445px;height:1px;background:#a6a6a6"></div>
<div class="t" style="left:593px;top:515px;font-size:18px;line-height:20px;color:#111;">Sök och ersätt...</div>
<div class="t" style="right:196px;top:515px;font-size:18px;line-height:20px;color:#111;">Ctrl+E</div>
<div class="t" style="left:593px;top:548px;font-size:18px;line-height:20px;color:#111;">Redigera artikel...</div>
<div class="t" style="right:196px;top:548px;font-size:18px;line-height:20px;color:#111;">Ctrl+D</div>
<div class="t" style="left:593px;top:581px;font-size:18px;line-height:20px;color:#111;">Sätt taggar...</div>
<div class="r" style="left:586px;top:611px;width:445px;height:1px;background:#a6a6a6"></div>
<div class="t" style="left:593px;top:622px;font-size:18px;line-height:20px;color:#111;">Inaktivera</div>
<div class="t" style="right:196px;top:622px;font-size:18px;line-height:20px;color:#111;">Ctrl+I</div>
<div class="t" style="left:593px;top:655px;font-size:18px;line-height:20px;color:#111;">Färgmarkering</div>
<svg class="r" style="left:1013px;top:658px" width="9" height="13" viewBox="0 0 9 13"><path d="M0 0l8 6.5L0 13z" fill="#000"/></svg>
<div class="r" style="left:586px;top:685px;width:445px;height:1px;background:#a6a6a6"></div>
<div class="t" style="left:593px;top:695px;font-size:18px;line-height:20px;color:#8d8d8d;">Lägg till mapp</div>
<div class="t" style="right:196px;top:695px;font-size:18px;line-height:20px;color:#8d8d8d;">Ctrl+M</div>
<div class="t" style="left:593px;top:728px;font-size:18px;line-height:20px;color:#111;">Lägg till artikel/byggdel...</div>
<div class="t" style="right:196px;top:728px;font-size:18px;line-height:20px;color:#111;">Ctrl+L / Ctrl+Ö</div>
<svg class="r" style="left:545px;top:725px" width="27" height="27" viewBox="0 0 27 27"><rect x="1" y="2" width="20" height="18" fill="#fff" stroke="#333" stroke-width="1.6"/><rect x="1" y="1.2" width="20" height="4.5" fill="#1f6db4"/><path d="M3 3.5h16" stroke="#8ccaf5" stroke-width="1.2"/><path d="M14.5 8.5h-7l3.5 4l-3.5 4h7" fill="none" stroke="#1f6db4" stroke-width="1.7"/><path d="M19.5 13.5v11M14 19h11" stroke="#1f6db4" stroke-width="4.2"/><path d="M19.5 15v8M15.5 19h8" stroke="#8ccaf5" stroke-width="1.6"/></svg>
<div class="t" style="left:593px;top:761px;font-size:18px;line-height:20px;color:#111;">Lägg till disponibel artikel</div>
<div class="t" style="right:196px;top:761px;font-size:18px;line-height:20px;color:#111;">Ctrl+J</div>
<div class="t" style="left:593px;top:794px;font-size:18px;line-height:20px;color:#111;">Lägg till disponibel byggdel</div>
<div class="t" style="right:196px;top:794px;font-size:18px;line-height:20px;color:#111;">Ctrl+K</div>
<div class="t" style="left:593px;top:827px;font-size:18px;line-height:20px;color:#111;">Dubblera</div>
<div class="t" style="right:196px;top:827px;font-size:18px;line-height:20px;color:#111;">F3</div>
<svg class="r" style="left:545px;top:823px" width="27" height="26" viewBox="0 0 27 26"><rect x="1.5" y="1.5" width="16" height="15" fill="#fff" stroke="#222" stroke-width="1.6"/><rect x="1.5" y="1" width="16" height="4" fill="#1f6db4"/><path d="M4 9h11" stroke="#222" stroke-width="2.2" stroke-dasharray="3 1"/><rect x="9" y="12" width="16.5" height="10" fill="#fff" stroke="#222" stroke-width="1.7"/><path d="M11.5 17h12" stroke="#222" stroke-width="2.2" stroke-dasharray="3 1"/><path d="M4 20.5l2.5 2.5l-2.5 2.5l-2.5-2.5z" fill="#1f6db4"/></svg>
<div class="t" style="left:593px;top:860px;font-size:18px;line-height:20px;color:#111;">Ta bort</div>
<div class="t" style="right:196px;top:860px;font-size:18px;line-height:20px;color:#111;">Del</div>
<svg class="r" style="left:546px;top:855px" width="24" height="26" viewBox="0 0 24 26"><path d="M2 2l19 22M21 2L2 24" stroke="#e53d50" stroke-width="1.7" fill="none"/></svg>
<div class="r" style="left:586px;top:890px;width:445px;height:1px;background:#a6a6a6"></div>
<div class="t" style="left:593px;top:901px;font-size:18px;line-height:20px;color:#8d8d8d;">Flytta upp</div>
<div class="t" style="right:196px;top:901px;font-size:18px;line-height:20px;color:#8d8d8d;">Ctrl+Uppåtpil</div>
<svg class="r" style="left:546px;top:898px" width="24" height="26" viewBox="0 0 24 26"><path d="M12 1.5l10 11h-5.5v9.5h-9v-9.5H2z" fill="#dadada" stroke="#8c8c8c" stroke-width="1.5" stroke-linejoin="round"/></svg>
<div class="t" style="left:593px;top:934px;font-size:18px;line-height:20px;color:#111;">Flytta ner</div>
<div class="t" style="right:196px;top:934px;font-size:18px;line-height:20px;color:#111;">Ctrl+Nedåtpil</div>
<svg class="r" style="left:546px;top:930px" width="24" height="26" viewBox="0 0 24 26"><path d="M7 2h10v9.5h5.5L12 23.5L1.5 11.5H7z" fill="#8cc8f3" stroke="#1f5fa8" stroke-width="1.9" stroke-linejoin="round"/><path d="M10 4v8M14 4v8" stroke="#b9e0fa" stroke-width="1.2"/></svg>
<div class="r" style="left:586px;top:964px;width:445px;height:1px;background:#a6a6a6"></div>
<div class="t" style="left:593px;top:974px;font-size:18px;line-height:20px;color:#111;">Gå till vald artikel</div>
<div class="t" style="left:593px;top:1007px;font-size:18px;line-height:20px;color:#111;">Visa prisjämförelse...</div>
<div class="r" style="left:540px;top:1034px;width:492px;height:32px;background:#bcd8f4;border:2px solid #2472bf;box-sizing:border-box"></div>
<div class="t" style="left:593px;top:1040px;font-size:18px;line-height:20px;color:#111;">Visa produktinformation på internet</div>
<div class="t" style="right:196px;top:1040px;font-size:18px;line-height:20px;color:#111;">Alt+I</div>
<div class="r" style="left:586px;top:1070px;width:445px;height:1px;background:#a6a6a6"></div>
<div class="t" style="left:593px;top:1080px;font-size:18px;line-height:20px;color:#111;">Fast artikelbyte...</div>
<div class="r" style="left:586px;top:1110px;width:445px;height:1px;background:#a6a6a6"></div>
<div class="t" style="left:593px;top:1120px;font-size:18px;line-height:20px;color:#111;">Noteringar och dokument</div>
<div class="t" style="right:196px;top:1120px;font-size:18px;line-height:20px;color:#111;">Skift+F2</div>
<div class="r" style="left:586px;top:1151px;width:445px;height:1px;background:#a6a6a6"></div>
<div class="t" style="left:593px;top:1161px;font-size:18px;line-height:20px;color:#111;">Återställ rad</div>
<div class="r" style="left:586px;top:1191px;width:445px;height:1px;background:#a6a6a6"></div>
</div></body></html>
